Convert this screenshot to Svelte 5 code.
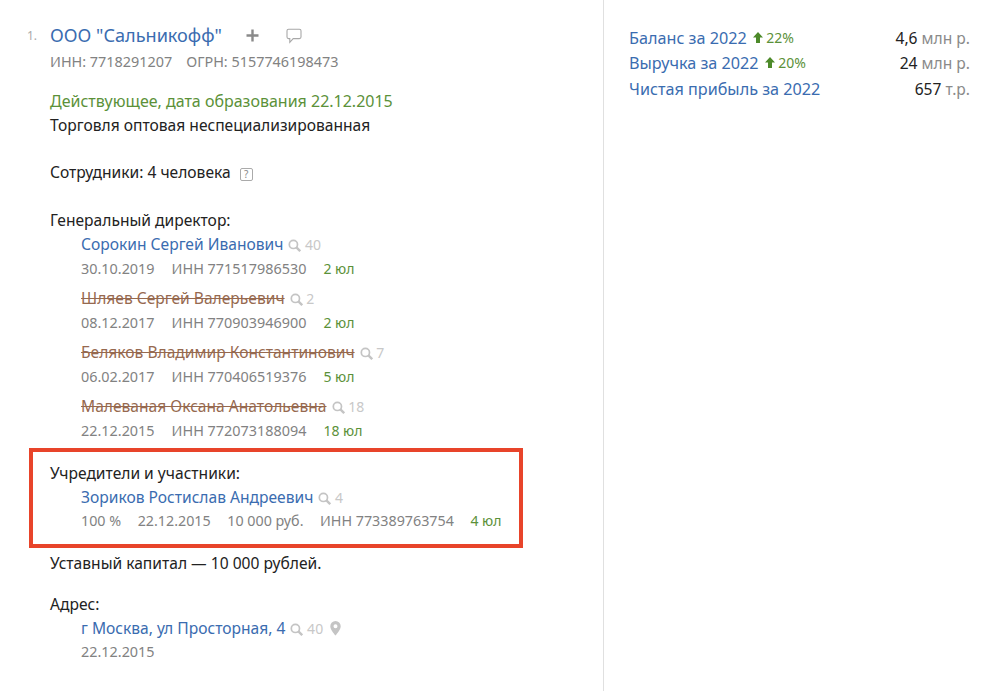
<script>
    const directors = [
        { name: "Сорокин Сергей Иванович", hits: 40, date: "30.10.2019", inn: "771517986530", day: "2 юл" },
        { name: "Шляев Сергей Валерьевич", hits: 2, date: "08.12.2017", inn: "770903946900", day: "2 юл", old: true },
        { name: "Беляков Владимир Константинович", hits: 7, date: "06.02.2017", inn: "770406519376", day: "5 юл", old: true },
        { name: "Малеваная Оксана Анатольевна", hits: 18, date: "22.12.2015", inn: "772073188094", day: "18 юл", old: true },
    ];
    const finance = [
        { label: "Баланс за 2022", growth: "22%", value: "4,6", unit: "млн р." },
        { label: "Выручка за 2022", growth: "20%", value: "24", unit: "млн р." },
        { label: "Чистая прибыль за 2022", value: "657", unit: "т.р." },
    ];
</script>

{#snippet hits(count)}
    <span class="hits">
        <svg width="13" height="13" viewBox="0 0 13 13" fill="none" stroke="#c4c4c4" stroke-width="1.7">
            <circle cx="5.4" cy="5.4" r="4.1" />
            <path d="M8.4 8.4 L12.2 12.2" stroke-width="2.4" />
        </svg>
        {count}
    </span>
{/snippet}

<div class="page">
    <main class="left">
        <div class="company">
            <span class="num">1.</span>
            <div class="head">
                <a class="title" href="#top">ООО "Сальникофф"</a>
                <svg class="plus" width="13" height="13" viewBox="0 0 13 13">
                    <path d="M6.5 0.5 V12.5 M0.5 6.5 H12.5" stroke="#8a8a8a" stroke-width="2.4" />
                </svg>
                <svg class="note" width="16" height="16" viewBox="0 0 16 16" fill="none" stroke="#a8a8a8" stroke-width="1.1">
                    <path d="M2.6 1.2 H13.4 Q15 1.2 15 2.8 V9 Q15 10.6 13.4 10.6 H7.2 L3.8 14.4 V10.6 H2.6 Q1 10.6 1 9 V2.8 Q1 1.2 2.6 1.2 Z" />
                </svg>
            </div>
        </div>
        <div class="ids"><span>ИНН: 7718291207</span><span>ОГРН: 5157746198473</span></div>

        <div class="line status">Действующее, дата образования 22.12.2015</div>
        <div class="line">Торговля оптовая неспециализированная</div>

        <div class="line staff">
            Сотрудники: 4 человека
            <span class="help">?</span>
        </div>

        <div class="line label">Генеральный директор:</div>
        {#each directors as d}
            <div class="person">
                <div class="line">
                    <a class="link" class:old={d.old} href="#top">{d.name}</a>
                    {@render hits(d.hits)}
                </div>
                <div class="meta">
                    <span>{d.date}</span>
                    <span>ИНН {d.inn}</span>
                    <span class="day">{d.day}</span>
                </div>
            </div>
        {/each}

        <section class="marked">
            <div class="line">Учредители и участники:</div>
            <div class="person">
                <div class="line">
                    <a class="link" href="#top">Зориков Ростислав Андреевич</a>
                    {@render hits(4)}
                </div>
                <div class="meta tight">
                    <span>100 %</span>
                    <span>22.12.2015</span>
                    <span>10 000 руб.</span>
                    <span>ИНН 773389763754</span>
                    <span class="day">4 юл</span>
                </div>
            </div>
        </section>

        <div class="line capital">Уставный капитал — 10 000 рублей.</div>

        <div class="line address">Адрес:</div>
        <div class="person">
            <div class="line">
                <a class="link" href="#top">г Москва, ул Просторная, 4</a>
                {@render hits(40)}
                <svg class="pin" width="11" height="15" viewBox="0 0 11 15">
                    <path fill-rule="evenodd" fill="#c4c4c4" d="M5.5 0 A5.2 5.2 0 0 1 10.7 5.2 C10.7 8.4 7.4 12 5.5 14.6 C3.6 12 0.3 8.4 0.3 5.2 A5.2 5.2 0 0 1 5.5 0 Z M5.5 3.2 A2 2 0 1 0 5.5 7.2 A2 2 0 1 0 5.5 3.2 Z" />
                </svg>
            </div>
            <div class="meta tight"><span>22.12.2015</span></div>
        </div>
    </main>

    <aside class="right">
        {#each finance as f}
            <div class="fin">
                <a class="link" href="#top">{f.label}</a>
                {#if f.growth}
                    <span class="growth">
                        <svg width="10" height="11" viewBox="0 0 10 11">
                            <path fill="#4d8a2a" d="M5 0 L10 5.6 H7 V11 H3 V5.6 H0 Z" />
                        </svg>
                        {f.growth}
                    </span>
                {/if}
                <span class="amount">{f.value} <span class="unit">{f.unit}</span></span>
            </div>
        {/each}
    </aside>
</div>

<style>
    :global(body) {
        background: #fff;
    }

    .page {
        display: flex;
        height: 691px;
        overflow: hidden;
        font-family: "Noto Sans", sans-serif;
        font-size: 15.6px;
        line-height: 24px;
        color: #222;
    }

    .left {
        box-sizing: border-box;
        width: 604px;
        padding: 21px 0 0 50px;
        border-right: 1px solid #e0e0e0;
    }

    .company {
        position: relative;
    }

    .num {
        position: absolute;
        left: -23px;
        top: 3px;
        font-size: 12px;
        color: #aaa;
    }

    .head {
        display: flex;
        align-items: center;
        height: 28px;
    }

    .title {
        font-size: 18.1px;
        color: #3a6cb0;
        text-decoration: none;
    }

    .plus {
        margin-left: 24px;
    }

    .note {
        margin: 1px 0 0 27px;
    }

    .ids {
        display: flex;
        gap: 14px;
        margin-top: 1px;
        font-size: 14.4px;
        color: #828282;
    }

    .line {
        height: 24px;
    }

    .status {
        margin-top: 15px;
        font-size: 16px;
        color: #5b9139;
    }

    .staff {
        margin-top: 23px;
    }

    .help {
        display: inline-block;
        box-sizing: border-box;
        width: 13px;
        height: 13px;
        margin-left: 5px;
        border: 1px solid #aaa;
        border-radius: 2px;
        font-size: 10px;
        line-height: 11px;
        text-align: center;
        color: #888;
    }

    .label {
        margin-top: 24px;
    }

    .person {
        margin: 0 0 5px 31px;
    }

    .link {
        color: #3a6cb0;
        text-decoration: none;
    }

    .link.old {
        color: #96694f;
        text-decoration: line-through;
    }

    .hits {
        font-size: 14px;
        color: #c8c8c8;
    }

    .hits svg {
        margin-left: 1px;
        vertical-align: -2px;
    }

    .pin {
        margin-left: 3px;
        vertical-align: -2px;
    }

    .meta {
        display: flex;
        gap: 17px;
        margin-top: 1px;
        font-size: 14.4px;
        color: #828282;
    }

    .meta.tight {
        margin-top: 0;
    }

    .marked .meta {
        gap: 16.5px;
        font-size: 14.3px;
    }

    .day {
        color: #5b9139;
        font-size: 14px;
    }

    .marked {
        box-sizing: border-box;
        width: 494px;
        height: 100px;
        margin: 4px 0 0 -21px;
        padding: 9px 0 0 17px;
        border: 4px solid #e8442a;
    }

    .capital {
        margin-top: 3px;
    }

    .address {
        margin-top: 17px;
    }

    .right {
        flex: 1;
        padding: 25px 30px 0 25px;
    }

    .right .link {
        font-size: 16.2px;
    }

    .fin {
        display: flex;
        align-items: center;
        gap: 6px;
        height: 25.5px;
    }

    .growth {
        font-size: 14px;
        color: #5b9139;
    }

    .amount {
        margin-left: auto;
        font-size: 15.6px;
        color: #222;
    }

    .unit {
        color: #8a8a8a;
    }
</style>
